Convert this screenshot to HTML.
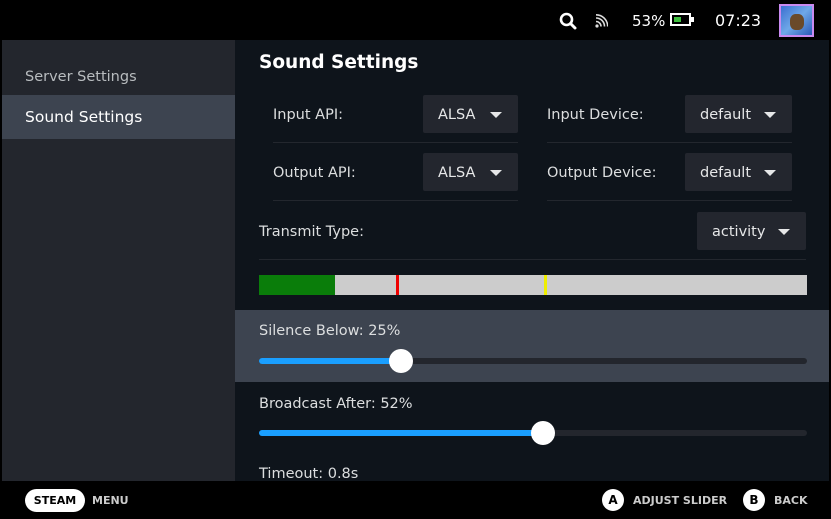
<!DOCTYPE html>
<html><head><style>
*{margin:0;padding:0;box-sizing:border-box}
body{width:831px;height:519px;background:#000;font-family:"DejaVu Sans","Liberation Sans",sans-serif;color:#dcdedf;position:relative;overflow:hidden}
.abs{position:absolute}
#side{left:2px;top:40px;width:233px;height:441px;background:#23262d}
#main{left:235px;top:40px;width:594px;height:441px;background:#0e141b;overflow:hidden}
.t{font-size:14.5px;color:#dcdedf;white-space:nowrap}
.dd{position:absolute;background:#23262e;height:38px;border-radius:2px;font-size:14.5px;color:#e6e7e8;line-height:40px;padding-left:15px}
.dd:after{content:"";position:absolute;right:16px;top:17px;border-left:6px solid transparent;border-right:6px solid transparent;border-top:6px solid #e6e7e8}
.sep{position:absolute;height:1px;background:#23272e}
</style></head><body>
<svg class="abs" style="left:559px;top:12px" width="18" height="18" viewBox="0 0 18 18"><circle cx="7.5" cy="7.5" r="5.5" fill="none" stroke="#fff" stroke-width="2.6"/><line x1="11.5" y1="11.5" x2="16" y2="16" stroke="#fff" stroke-width="3" stroke-linecap="round"/></svg>
<svg class="abs" style="left:595px;top:14px" width="13" height="14" viewBox="0 0 13 14"><circle cx="2" cy="12" r="1.6" fill="#ddd"/><path d="M1 7.5a5 5 0 0 1 5 5M1 4a8.5 8.5 0 0 1 8.5 8.5M1 .8a11.7 11.7 0 0 1 11.7 11.7" fill="none" stroke="#ddd" stroke-width="1.6"/></svg>
<div class="abs" style="left:632px;top:12px;font-size:15px;color:#fff">53%</div>
<div class="abs" style="left:670px;top:13px;width:21px;height:13px;border:2px solid #fff"><div style="margin:2px;width:7px;height:5px;background:#3fbf3f"></div></div>
<div class="abs" style="left:691px;top:17px;width:3px;height:5px;background:#fff"></div>
<div class="abs" style="left:715px;top:11px;font-size:16px;color:#fff">07:23</div>
<div class="abs" style="left:779px;top:4px;width:35px;height:33px;border:2px solid #c98af0;background:linear-gradient(135deg,#3a6fd0,#6fa8e8 50%,#2a5ab8)"><div style="margin:8px 9px;width:14px;height:16px;background:#6a4a2a;border-radius:40%"></div></div>
<div class="abs" id="side">
<div class="t abs" style="left:23px;top:29px;color:#b8bcbf">Server Settings</div>
<div class="abs" style="left:0;top:55px;width:233px;height:44px;background:#3d4450"></div>
<div class="abs" style="left:23px;top:68px;font-size:15.5px;color:#fff">Sound Settings</div>
</div>
<div class="abs" id="main">
<div class="abs" style="left:24px;top:12px;font-size:18.5px;font-weight:bold;color:#fff">Sound Settings</div>
<div class="t abs" style="left:38px;top:67px">Input API:</div>
<div class="dd" style="left:188px;top:55px;width:95px">ALSA</div>
<div class="t abs" style="left:312px;top:67px">Input Device:</div>
<div class="dd" style="left:450px;top:55px;width:107px">default</div>
<div class="sep" style="left:38px;top:102px;width:245px"></div>
<div class="sep" style="left:312px;top:102px;width:245px"></div>
<div class="t abs" style="left:38px;top:125px">Output API:</div>
<div class="dd" style="left:188px;top:113px;width:95px">ALSA</div>
<div class="t abs" style="left:312px;top:125px">Output Device:</div>
<div class="dd" style="left:450px;top:113px;width:107px">default</div>
<div class="sep" style="left:38px;top:160px;width:245px"></div>
<div class="sep" style="left:312px;top:160px;width:245px"></div>
<div class="t abs" style="left:24px;top:184px">Transmit Type:</div>
<div class="dd" style="left:462px;top:172px;width:109px">activity</div>
<div class="sep" style="left:24px;top:219px;width:547px"></div>
<div class="abs" style="left:24px;top:235px;width:548px;height:20px;background:#ccc"></div>
<div class="abs" style="left:24px;top:235px;width:76px;height:20px;background:#0a7d0a"></div>
<div class="abs" style="left:161px;top:235px;width:3px;height:20px;background:#e00"></div>
<div class="abs" style="left:309px;top:235px;width:3px;height:20px;background:#ee0"></div>
<div class="abs" style="left:0;top:270px;width:594px;height:72px;background:#3d4450"></div>
<div class="t abs" style="left:24px;top:283px">Silence Below: 25%</div>
<div class="abs" style="left:24px;top:318px;width:548px;height:6px;border-radius:3px;background:#23262d"></div>
<div class="abs" style="left:24px;top:318px;width:142px;height:6px;border-radius:3px;background:#1a9fff"></div>
<div class="abs" style="left:154px;top:309px;width:24px;height:24px;border-radius:50%;background:#fff"></div>
<div class="t abs" style="left:24px;top:356px">Broadcast After: 52%</div>
<div class="abs" style="left:24px;top:390px;width:548px;height:6px;border-radius:3px;background:#23262d"></div>
<div class="abs" style="left:24px;top:390px;width:284px;height:6px;border-radius:3px;background:#1a9fff"></div>
<div class="abs" style="left:296px;top:381px;width:24px;height:24px;border-radius:50%;background:#fff"></div>
<div class="t abs" style="left:24px;top:426px">Timeout: 0.8s</div>
</div>
<div class="abs" style="left:25px;top:489px;width:60px;height:23px;border-radius:12px;background:#fff;color:#000;font-size:11px;font-weight:bold;text-align:center;line-height:23px">STEAM</div>
<div class="abs" style="left:92px;top:494px;font-size:11px;font-weight:bold;color:#ccc">MENU</div>
<div class="abs" style="left:602px;top:489px;width:22px;height:22px;border-radius:50%;background:#fff;color:#000;font-size:12px;font-weight:bold;text-align:center;line-height:22px">A</div>
<div class="abs" style="left:633px;top:494px;font-size:11px;font-weight:bold;color:#ccc">ADJUST SLIDER</div>
<div class="abs" style="left:743px;top:489px;width:22px;height:22px;border-radius:50%;background:#fff;color:#000;font-size:12px;font-weight:bold;text-align:center;line-height:22px">B</div>
<div class="abs" style="left:774px;top:494px;font-size:11px;font-weight:bold;color:#ccc">BACK</div>
</body></html>
